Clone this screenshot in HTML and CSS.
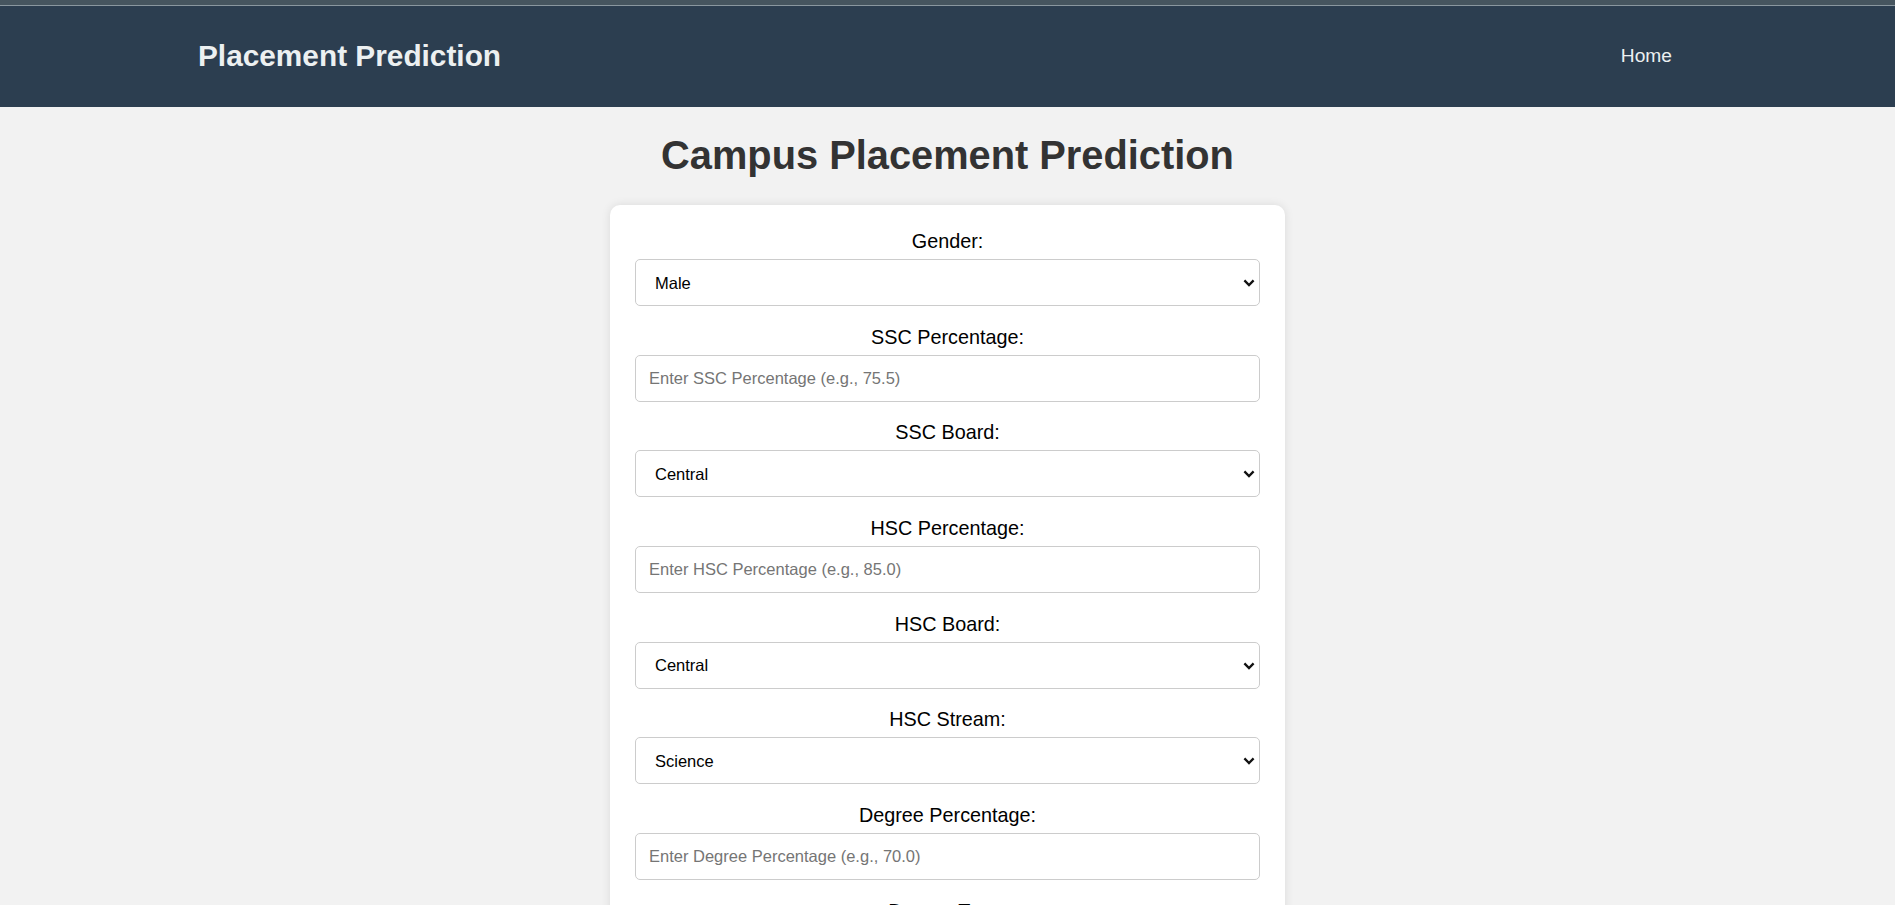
FILE: index.html
```html
<!DOCTYPE html>
<html lang="en">
<head>
<meta charset="utf-8">
<title>Campus Placement Prediction</title>
<link rel="stylesheet" href="styles.css">
</head>
<body>
<div class="topbar"></div>
<header class="navbar">
  <div class="brand">Placement Prediction</div>
  <nav class="nav"><a class="nav-link" href="#">Home</a></nav>
</header>
<main class="main">
  <h1 class="page-title">Campus Placement Prediction</h1>
  <form class="card">
    <label class="field-label" for="gender">Gender:</label>
    <div class="select-wrap">
      <select class="field select" id="gender"><option>Male</option><option>Female</option></select>
      <svg class="chevron" width="12" height="8" viewBox="0 0 12 8"><path d="M1.4 1.4 L6 6 L10.6 1.4" fill="none" stroke="#111" stroke-width="2.3"/></svg>
    </div>

    <label class="field-label" for="ssc_p">SSC Percentage:</label>
    <input class="field input" id="ssc_p" type="text" placeholder="Enter SSC Percentage (e.g., 75.5)">

    <label class="field-label" for="ssc_b">SSC Board:</label>
    <div class="select-wrap">
      <select class="field select" id="ssc_b"><option>Central</option><option>Others</option></select>
      <svg class="chevron" width="12" height="8" viewBox="0 0 12 8"><path d="M1.4 1.4 L6 6 L10.6 1.4" fill="none" stroke="#111" stroke-width="2.3"/></svg>
    </div>

    <label class="field-label" for="hsc_p">HSC Percentage:</label>
    <input class="field input" id="hsc_p" type="text" placeholder="Enter HSC Percentage (e.g., 85.0)">

    <label class="field-label" for="hsc_b">HSC Board:</label>
    <div class="select-wrap">
      <select class="field select" id="hsc_b"><option>Central</option><option>Others</option></select>
      <svg class="chevron" width="12" height="8" viewBox="0 0 12 8"><path d="M1.4 1.4 L6 6 L10.6 1.4" fill="none" stroke="#111" stroke-width="2.3"/></svg>
    </div>

    <label class="field-label" for="hsc_s">HSC Stream:</label>
    <div class="select-wrap">
      <select class="field select" id="hsc_s"><option>Science</option><option>Commerce</option><option>Arts</option></select>
      <svg class="chevron" width="12" height="8" viewBox="0 0 12 8"><path d="M1.4 1.4 L6 6 L10.6 1.4" fill="none" stroke="#111" stroke-width="2.3"/></svg>
    </div>

    <label class="field-label" for="degree_p">Degree Percentage:</label>
    <input class="field input" id="degree_p" type="text" placeholder="Enter Degree Percentage (e.g., 70.0)">

    <label class="field-label" for="degree_t">Degree Type:</label>
    <div class="select-wrap">
      <select class="field select" id="degree_t"><option>Sci&amp;Tech</option><option>Comm&amp;Mgmt</option><option>Others</option></select>
      <svg class="chevron" width="12" height="8" viewBox="0 0 12 8"><path d="M1.4 1.4 L6 6 L10.6 1.4" fill="none" stroke="#111" stroke-width="2.3"/></svg>
    </div>

    <label class="field-label" for="workex">Work Experience:</label>
    <div class="select-wrap">
      <select class="field select" id="workex"><option>No</option><option>Yes</option></select>
      <svg class="chevron" width="12" height="8" viewBox="0 0 12 8"><path d="M1.4 1.4 L6 6 L10.6 1.4" fill="none" stroke="#111" stroke-width="2.3"/></svg>
    </div>

    <label class="field-label" for="etest_p">Employability Test Percentage:</label>
    <input class="field input" id="etest_p" type="text" placeholder="Enter Employability Test Percentage (e.g., 80.0)">

    <label class="field-label" for="spec">Specialisation:</label>
    <div class="select-wrap">
      <select class="field select" id="spec"><option>Mkt&amp;HR</option><option>Mkt&amp;Fin</option></select>
      <svg class="chevron" width="12" height="8" viewBox="0 0 12 8"><path d="M1.4 1.4 L6 6 L10.6 1.4" fill="none" stroke="#111" stroke-width="2.3"/></svg>
    </div>

    <label class="field-label" for="mba_p">MBA Percentage:</label>
    <input class="field input" id="mba_p" type="text" placeholder="Enter MBA Percentage (e.g., 65.0)">

    <button class="submit" type="submit">Predict</button>
  </form>
</main>
</body>
</html>
```

FILE: styles.css
```css
html, body {
  margin: 0;
  padding: 0;
}

body {
  background: #f2f2f2;
  font-family: "Liberation Sans", Arial, sans-serif;
  color: #000;
}

.topbar {
  height: 5px;
  background: #46555f;
  border-bottom: 1px solid #8a979f;
}

.navbar {
  height: 101px;
  box-sizing: border-box;
  background: #2c3e50;
  display: flex;
  align-items: center;
  justify-content: space-between;
  padding: 0 198px 2px;
}

.brand {
  color: #ecf0f1;
  font-size: 29.8px;
  font-weight: bold;
}

.nav {
  display: flex;
}

.nav-link {
  color: #ecf0f1;
  font-size: 19.2px;
  text-decoration: none;
  padding: 0 25px;
}

.main {
  padding-bottom: 40px;
}

.page-title {
  margin: 26px 0 27px;
  text-align: center;
  font-size: 39.8px;
  font-weight: bold;
  color: #333;
}

.card {
  width: 675px;
  box-sizing: border-box;
  margin: 0 auto;
  padding: 25px 25px 25px;
  background: #fff;
  border-radius: 10px;
  box-shadow: 0 0 10px rgba(0, 0, 0, 0.1);
}

.field-label {
  display: block;
  text-align: center;
  font-size: 19.8px;
  line-height: 23px;
  margin-bottom: 6px;
}

.select-wrap {
  position: relative;
  margin: 0 0 19.7px;
}

.field {
  display: block;
  width: 100%;
  height: 47px;
  box-sizing: border-box;
  padding: 0 13px;
  margin: 0 0 19.7px;
  font-family: "Liberation Sans", Arial, sans-serif;
  font-size: 16.5px;
  color: #000;
  background: #fff;
  border: 1px solid #ccc;
  border-radius: 5px;
  outline: none;
}

.select {
  -webkit-appearance: none;
  appearance: none;
  padding: 0 30px 0 19px;
  margin: 0;
}

.chevron {
  position: absolute;
  right: 5px;
  top: 20px;
  pointer-events: none;
}

.input::placeholder {
  color: #757575;
}

.submit {
  display: block;
  width: 100%;
  padding: 14px;
  font-family: "Liberation Sans", Arial, sans-serif;
  font-size: 19.8px;
  color: #fff;
  background: #2c3e50;
  border: none;
  border-radius: 5px;
}
```
